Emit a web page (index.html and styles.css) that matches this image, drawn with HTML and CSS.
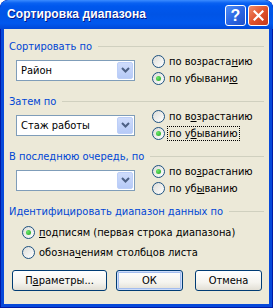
FILE: index.html
```html
<!DOCTYPE html>
<html lang="ru">
<head>
    <meta charset="UTF-8">
    <title>Сортировка диапазона</title>
    <link rel="stylesheet" href="styles.css">
</head>
<body>
    <div class="window">
        <div class="titlebar">
            <span class="title">Сортировка диапазона</span>
            <div class="caption-buttons">
                <span class="cap-btn help">?</span>
                <span class="cap-btn close">
                    <svg width="11" height="11" viewBox="0 0 11 11">
                        <path d="M1.5 1.5 L9.5 9.5 M9.5 1.5 L1.5 9.5" stroke="#fff" stroke-width="2.2" stroke-linecap="square"/>
                    </svg>
                </span>
            </div>
        </div>

        <div class="client">
            <div class="group">
                <div class="group-title">Сортировать по</div>
                <div class="sort-row">
                    <div class="combo">
                        <span class="combo-text">Район</span>
                        <span class="combo-arrow"><svg width="9" height="6" viewBox="0 0 9 6"><path d="M1 1 L4.5 4.5 L8 1" fill="none" stroke="#4D6185" stroke-width="2"/></svg></span>
                    </div>
                    <div class="radios">
                        <div class="radio"><span class="circle"></span><span class="label">по возраста<u>н</u>ию</span></div>
                        <div class="radio checked"><span class="circle"></span><span class="label">по убывани<u>ю</u></span></div>
                    </div>
                </div>
            </div>

            <div class="group">
                <div class="group-title">Затем по</div>
                <div class="sort-row">
                    <div class="combo">
                        <span class="combo-text">Стаж работы</span>
                        <span class="combo-arrow"><svg width="9" height="6" viewBox="0 0 9 6"><path d="M1 1 L4.5 4.5 L8 1" fill="none" stroke="#4D6185" stroke-width="2"/></svg></span>
                    </div>
                    <div class="radios">
                        <div class="radio"><span class="circle"></span><span class="label">по в<u>о</u>зрастанию</span></div>
                        <div class="radio checked"><span class="circle"></span><span class="label focused">по у<u>б</u>ыванию</span></div>
                    </div>
                </div>
            </div>

            <div class="group">
                <div class="group-title">В последнюю очередь, по</div>
                <div class="sort-row">
                    <div class="combo">
                        <span class="combo-text"></span>
                        <span class="combo-arrow"><svg width="9" height="6" viewBox="0 0 9 6"><path d="M1 1 L4.5 4.5 L8 1" fill="none" stroke="#4D6185" stroke-width="2"/></svg></span>
                    </div>
                    <div class="radios">
                        <div class="radio checked"><span class="circle"></span><span class="label">по во<u>з</u>растанию</span></div>
                        <div class="radio"><span class="circle"></span><span class="label">по уб<u>ы</u>ванию</span></div>
                    </div>
                </div>
            </div>

            <div class="group">
                <div class="group-title">Идентифицировать диапазон данных по</div>
                <div class="id-radios">
                    <div class="radio checked"><span class="circle"></span><span class="label"><u>п</u>одписям (первая строка диапазона)</span></div>
                    <div class="radio"><span class="circle"></span><span class="label">обозна<u>ч</u>ениям столбцов листа</span></div>
                </div>
            </div>

            <div class="button-row">
                <button class="btn btn-params">П<u>а</u>раметры...</button>
                <button class="btn btn-ok">ОК</button>
                <button class="btn btn-cancel">Отмена</button>
            </div>
        </div>
    </div>
</body>
</html>
```

FILE: styles.css
```css
* {
    box-sizing: border-box;
}

body {
    margin: 0;
    font-family: "DejaVu Sans Condensed", "DejaVu Sans", sans-serif;
    font-size: 11px;
    color: #000;
}

.window {
    width: 273px;
    height: 308px;
    display: flex;
    flex-direction: column;
    background: #0749DA;
    border-radius: 8px 8px 0 0;
    box-shadow: inset 0 0 0 1px #0019A6;
    overflow: hidden;
}

.titlebar {
    height: 29px;
    display: flex;
    justify-content: space-between;
    align-items: flex-start;
    padding: 0 4px 0 7px;
    background: linear-gradient(#3C8CFF 0, #0A62F2 3px, #0058EE 6px, #0054E6 50%, #0058EE 80%, #0048D8 100%);
    border-radius: 8px 8px 0 0;
}

.title {
    margin-top: 7px;
    font-family: "Liberation Sans", sans-serif;
    font-weight: bold;
    font-size: 12px;
    letter-spacing: 0.1px;
    color: #fff;
    text-shadow: 1px 1px 0 #0A1883;
}

.caption-buttons {
    display: flex;
    gap: 2px;
    margin-top: 5px;
}

.cap-btn {
    width: 21px;
    height: 21px;
    display: flex;
    align-items: center;
    justify-content: center;
    border: 1px solid #fff;
    border-radius: 3px;
}

.help {
    background: linear-gradient(135deg, #4F8DF6 0%, #2B67E4 50%, #1F50C8 100%);
    color: #fff;
    font-family: "Liberation Sans", sans-serif;
    font-weight: bold;
    font-size: 16px;
}

.close {
    background: linear-gradient(135deg, #F08C6A 0%, #E0532C 50%, #C6381A 100%);
}

.client {
    flex: 1;
    margin: 0 4px 4px;
    padding: 10px 5px 0;
    background: #ECE9D8;
}

.group {
    margin-bottom: 7px;
}

.group-title {
    height: 14px;
    display: flex;
    align-items: center;
    color: #0046D5;
    white-space: nowrap;
}

.group-title::after {
    content: '';
    flex: 1;
    height: 1px;
    margin-left: 6px;
    background: #D0D0BF;
}

.sort-row {
    height: 34px;
    display: flex;
    align-items: center;
    padding-left: 7px;
}

.combo {
    width: 119px;
    height: 21px;
    display: flex;
    align-items: center;
    padding: 1px;
    background: #fff;
    border: 1px solid #7F9DB9;
}

.combo-text {
    flex: 1;
    padding-left: 3px;
}

.combo-arrow {
    width: 16px;
    height: 17px;
    display: flex;
    align-items: center;
    justify-content: center;
    background: linear-gradient(#CFDCFB, #B6CAF7);
    border: 1px solid #BDCFF8;
    border-radius: 2px;
}

.radios {
    margin-left: 17px;
}

.radio {
    height: 17px;
    display: flex;
    align-items: center;
}

.circle {
    position: relative;
    width: 13px;
    height: 13px;
    flex-shrink: 0;
    margin-right: 4px;
    border: 1px solid #1C5180;
    border-radius: 50%;
    background: linear-gradient(135deg, #DCDCD7, #FFFFFF);
}

.checked .circle::after {
    content: '';
    position: absolute;
    left: 3px;
    top: 3px;
    width: 5px;
    height: 5px;
    border-radius: 50%;
    background: radial-gradient(circle at 35% 35%, #6BE86B, #21A121);
}

.focused {
    outline: 1px dotted #000;
    padding: 0 1px;
    margin-left: -1px;
}

.id-radios {
    margin-top: 4px;
    padding-left: 13px;
}

.id-radios .radio {
    height: 20px;
}

.button-row {
    display: flex;
    margin-top: 8px;
    padding-left: 3px;
}

.btn {
    height: 21px;
    padding: 0;
    font-family: inherit;
    font-size: 11px;
    color: #000;
    border: 1px solid #003C74;
    border-radius: 3px;
    background: linear-gradient(#FFFFFF, #F5F4EF 60%, #E2DFD5);
}

.btn-params {
    width: 95px;
}

.btn-ok {
    width: 67px;
    margin-left: 9px;
    box-shadow: inset 0 0 0 1px #CEDDFA, inset 0 0 0 2px #A4BDEE;
}

.btn-cancel {
    width: 67px;
    margin-left: 12px;
}
```
